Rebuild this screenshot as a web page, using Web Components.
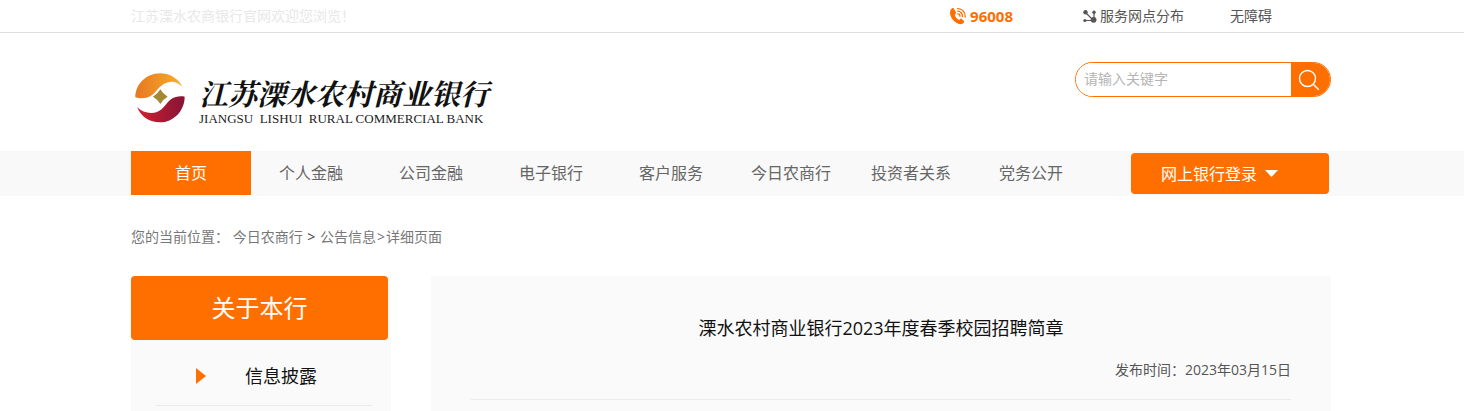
<!DOCTYPE html>
<html lang="zh-CN">
<head>
<meta charset="UTF-8">
<meta name="viewport" content="width=device-width, initial-scale=1">
<title>溧水农村商业银行2023年度春季校园招聘简章</title>
<style>
  :root {
    --brand: #ff6f00;
    --panel: #fafafa;
    --line: #eaeaea;
  }
  body {
    margin: 0;
    background: #fff;
    color: #555;
    font: 14px/20px "Open Sans", "Noto Sans CJK SC", sans-serif;
  }
</style>
</head>
<body>
<top-bar>江苏溧水农商银行官网欢迎您浏览！</top-bar>
<site-header></site-header>
<main-nav></main-nav>
<page-wrap>
  <bread-crumb></bread-crumb>
  <page-columns>
    <side-menu slot="side" heading="关于本行">信息披露</side-menu>
    <news-article>
      <span slot="title">溧水农村商业银行2023年度春季校园招聘简章</span>
      <span slot="date">发布时间：2023年03月15日</span>
    </news-article>
  </page-columns>
</page-wrap>

<script>
const base = `
  * { box-sizing: border-box; }
  :host { display: block; }
  a { color: inherit; text-decoration: none; }
  button, input { font: inherit; margin: 0; }
  svg { display: block; flex: none; }
`;

// centred column shared by every section of the page
const wrap = `
  .wrap {
    max-width: 1202px;
    margin: 0 auto;
    padding-right: 2px;
  }
`;

class TopBar extends HTMLElement {
  constructor() {
    super();
    this.attachShadow({ mode: 'open' });
    this.shadowRoot.innerHTML = `
      <style>
        ${base} ${wrap}
        :host { border-bottom: 1px solid #ddd; }
        .wrap {
          display: flex;
          align-items: center;
          justify-content: space-between;
          height: 32px;
        }
        .welcome { color: #e8e8e8; }
        .links { display: flex; padding-right: 59px; }
        a { display: flex; align-items: center; gap: 3px; }
        .tel { color: var(--brand); font-size: 15px; font-weight: 700; margin-right: 70px; }
        .map { margin-right: 46px; }
      </style>
      <div class="wrap">
        <span class="welcome"><slot></slot></span>
        <div class="links">
          <a class="tel" href="tel:96008">
            <svg width="18" height="18" viewBox="0 0 18 18" fill="none">
              <path fill="#ff6f00" d="M3.200 1.200 1.600 2.800C.2 6 1.300 9.800 4 13c2.600 3 6 4.600 9 4.100l2-1.700c.4-.4.4-.9 0-1.300l-2.300-2.200c-.4-.4-1-.4-1.400 0l-1.200 1c-2-.9-3.700-3-4.300-5l1-1.300c.4-.5.4-.9.1-1.300L4.600 1.300c-.4-.5-.9-.5-1.400-.1z"/>
              <path stroke="#ff6f00" stroke-width="1.300" stroke-linecap="round" d="M8.600 1.600c4.300-.2 7.900 3.600 7.700 8.400M8.700 4.200c2.700 0 4.900 2.300 4.800 5.300M8.800 6.900c1.300.1 2.200 1 2.200 2.400"/>
            </svg>
            96008
          </a>
          <a class="map" href="#">
            <svg width="14" height="14" viewBox="0 0 14 14">
              <path stroke="#555" stroke-width="1.200" fill="none" d="M2.500 3.500 10 11M11 3v8M2 11.500h8"/>
              <g fill="#555">
                <circle cx="2.500" cy="3.300" r="2.200"/>
                <circle cx="11" cy="3.200" r="1.700"/>
                <circle cx="1.900" cy="11.500" r="1.600"/>
                <circle cx="10.600" cy="10.800" r="2.900"/>
              </g>
            </svg>
            服务网点分布
          </a>
          <a href="#">无障碍</a>
        </div>
      </div>
    `;
  }
}

class BankLogo extends HTMLElement {
  constructor() {
    super();
    this.attachShadow({ mode: 'open' });
    this.shadowRoot.innerHTML = `
      <style>
        ${base}
        a { display: flex; gap: 14px; color: #111; }
        .name {
          display: block;
          font: italic 700 29px/40px "Noto Serif CJK SC", "Noto Sans CJK SC", serif;
          white-space: nowrap;
        }
        .latin {
          display: block;
          font: 13px/12px "Liberation Serif", serif;
          color: #222;
          white-space: pre;
        }
      </style>
      <a href="#">
        <svg width="50" height="50" viewBox="29 40 150 150" aria-hidden="true">
          <defs>
            <linearGradient id="gold"><stop offset="0" stop-color="#e87722"/><stop offset="1" stop-color="#f5b02a"/></linearGradient>
            <linearGradient id="red"><stop offset="0" stop-color="#d32030"/><stop offset="1" stop-color="#851436"/></linearGradient>
          </defs>
          <path fill="url(#gold)" d="M30 113C30 75 62 41 104 41c32 0 56 17 68 42C158 66 138 62 120 71 100 80 94 98 76 109 62 117 45 117 30 113z"/>
          <path fill="url(#red)" d="M178 111c0 43-34 77-74 77-32 0-58-18-69-46C50 158 75 164 95 157 115 149 122 130 138 118 150 110 165 108 178 111z"/>
          <path fill="#a58a35" d="M105 89q8 14 22 22-14 8-22 22-8-14-22-22 14-8 22-22z"/>
        </svg>
        <span>
          <span class="name">江苏溧水农村商业银行</span>
          <span class="latin">JIANGSU  LISHUI  RURAL COMMERCIAL BANK</span>
        </span>
      </a>
    `;
  }
}

class SearchBox extends HTMLElement {
  constructor() {
    super();
    this.attachShadow({ mode: 'open' });
    this.shadowRoot.innerHTML = `
      <style>
        ${base}
        form {
          display: flex;
          width: 256px;
          height: 35px;
          border: 1px solid var(--brand);
          border-radius: 18px;
          overflow: hidden;
        }
        input {
          flex: 1;
          min-width: 0;
          padding: 0 8px 2px;
          border: 0;
          outline: 0;
          background: #fff;
        }
        input::placeholder { color: #b5b5b5; opacity: 1; }
        button {
          width: 39px;
          padding: 0 0 0 7px;
          border: 0;
          background: var(--brand);
          cursor: pointer;
        }
      </style>
      <form role="search">
        <input type="text" aria-label="搜索" placeholder="请输入关键字">
        <button type="button" aria-label="搜索">
          <svg width="22" height="22" viewBox="0 0 22 22" fill="none" stroke="#fff" stroke-width="1.400">
            <circle cx="9.500" cy="9.500" r="8"/>
            <path d="m15.200 15.200 5.600 5.600"/>
          </svg>
        </button>
      </form>
    `;
  }
}

class SiteHeader extends HTMLElement {
  constructor() {
    super();
    this.attachShadow({ mode: 'open' });
    this.shadowRoot.innerHTML = `
      <style>
        ${base} ${wrap}
        .wrap {
          display: flex;
          justify-content: space-between;
          align-items: flex-start;
          min-height: 118px;
        }
        bank-logo { padding: 40px 0 0 4px; }
        search-box { padding-top: 29px; }
      </style>
      <header class="wrap">
        <bank-logo></bank-logo>
        <search-box></search-box>
      </header>
    `;
  }
}

class MainNav extends HTMLElement {
  constructor() {
    super();
    this.attachShadow({ mode: 'open' });
    this.items = ['首页', '个人金融', '公司金融', '电子银行', '客户服务', '今日农商行', '投资者关系', '党务公开'];
    this.render();
  }

  render() {
    this.shadowRoot.innerHTML = `
      <style>
        ${base} ${wrap}
        :host { background: #f9f9f9; font-size: 16px; }
        .wrap {
          display: flex;
          justify-content: space-between;
          padding-bottom: 1px;
        }
        nav { display: flex; }
        nav a {
          width: 120px;
          line-height: 44px;
          text-align: center;
          color: #666;
        }
        nav a.on { background: var(--brand); color: #fff; }
        button {
          display: flex;
          align-items: center;
          gap: 8px;
          width: 198px;
          height: 41px;
          margin: 2px 2px 0 0;
          padding: 0 30px;
          border: 0;
          border-radius: 4px;
          background: var(--brand);
          color: #fff;
          cursor: pointer;
        }
      </style>
      <div class="wrap">
        <nav>
          ${this.items.map((name, i) => `<a href="#"${i === 0 ? ' class="on"' : ''}>${name}</a>`).join('')}
        </nav>
        <button type="button">
          网上银行登录
          <svg width="13" height="8" viewBox="0 0 13 8"><path fill="#fff" d="M0 0h13L6.500 7z"/></svg>
        </button>
      </div>
    `;
  }
}

class PageWrap extends HTMLElement {
  constructor() {
    super();
    this.attachShadow({ mode: 'open' });
    this.shadowRoot.innerHTML = `
      <style>${base} ${wrap}</style>
      <main class="wrap"><slot></slot></main>
    `;
  }
}

class BreadCrumb extends HTMLElement {
  constructor() {
    super();
    this.attachShadow({ mode: 'open' });
    this.shadowRoot.innerHTML = `
      <style>
        ${base}
        nav { padding: 31px 0 29px; color: #777; }
        b { font-weight: 400; padding: 0 1px; }
        .first { color: #444; }
      </style>
      <nav>您的当前位置： <a href="#">今日农商行</a> <b class="first">&gt;</b> <a href="#">公告信息</a><b>&gt;</b>详细页面</nav>
    `;
  }
}

class PageColumns extends HTMLElement {
  constructor() {
    super();
    this.attachShadow({ mode: 'open' });
    this.shadowRoot.innerHTML = `
      <style>
        ${base}
        .columns { display: flex; gap: 40px; }
        .side { width: 260px; }
        .content { flex: 1; min-width: 0; }
      </style>
      <div class="columns">
        <div class="side"><slot name="side"></slot></div>
        <div class="content"><slot></slot></div>
      </div>
    `;
  }
}

class SideMenu extends HTMLElement {
  constructor() {
    super();
    this.attachShadow({ mode: 'open' });
  }

  connectedCallback() {
    this.shadowRoot.innerHTML = `
      <style>
        ${base}
        :host { background: var(--panel); padding-bottom: 5px; }
        h2 {
          margin: 0 3px 0 0;
          border-radius: 4px;
          background: var(--brand);
          color: #fff;
          font-size: 24px;
          font-weight: 400;
          line-height: 64px;
          text-align: center;
        }
        a {
          display: flex;
          align-items: center;
          gap: 39px;
          height: 66px;
          margin: 0 19px 0 25px;
          padding: 6px 0 0 40px;
          border-bottom: 1px solid var(--line);
          color: #111;
          font-size: 18px;
        }
      </style>
      <h2>${this.getAttribute('heading')}</h2>
      <a href="#">
        <svg width="10" height="16" viewBox="0 0 10 16"><path fill="#ff6f00" d="M0 0v16l10-8z"/></svg>
        <slot></slot>
      </a>
    `;
  }
}

class NewsArticle extends HTMLElement {
  constructor() {
    super();
    this.attachShadow({ mode: 'open' });
    this.shadowRoot.innerHTML = `
      <style>
        ${base}
        :host { background: var(--panel); }
        article { padding: 38px 40px 11px; }
        h1 {
          margin: 0;
          color: #111;
          font-size: 18px;
          font-weight: 400;
          line-height: 28px;
          text-align: center;
        }
        p {
          margin: 0;
          padding: 18px 0 19px;
          border-bottom: 1px solid var(--line);
          text-align: right;
        }
      </style>
      <article>
        <h1><slot name="title"></slot></h1>
        <p><slot name="date"></slot></p>
      </article>
    `;
  }
}

customElements.define('top-bar', TopBar);
customElements.define('bank-logo', BankLogo);
customElements.define('search-box', SearchBox);
customElements.define('site-header', SiteHeader);
customElements.define('main-nav', MainNav);
customElements.define('page-wrap', PageWrap);
customElements.define('bread-crumb', BreadCrumb);
customElements.define('page-columns', PageColumns);
customElements.define('side-menu', SideMenu);
customElements.define('news-article', NewsArticle);
</script>
</body>
</html>
